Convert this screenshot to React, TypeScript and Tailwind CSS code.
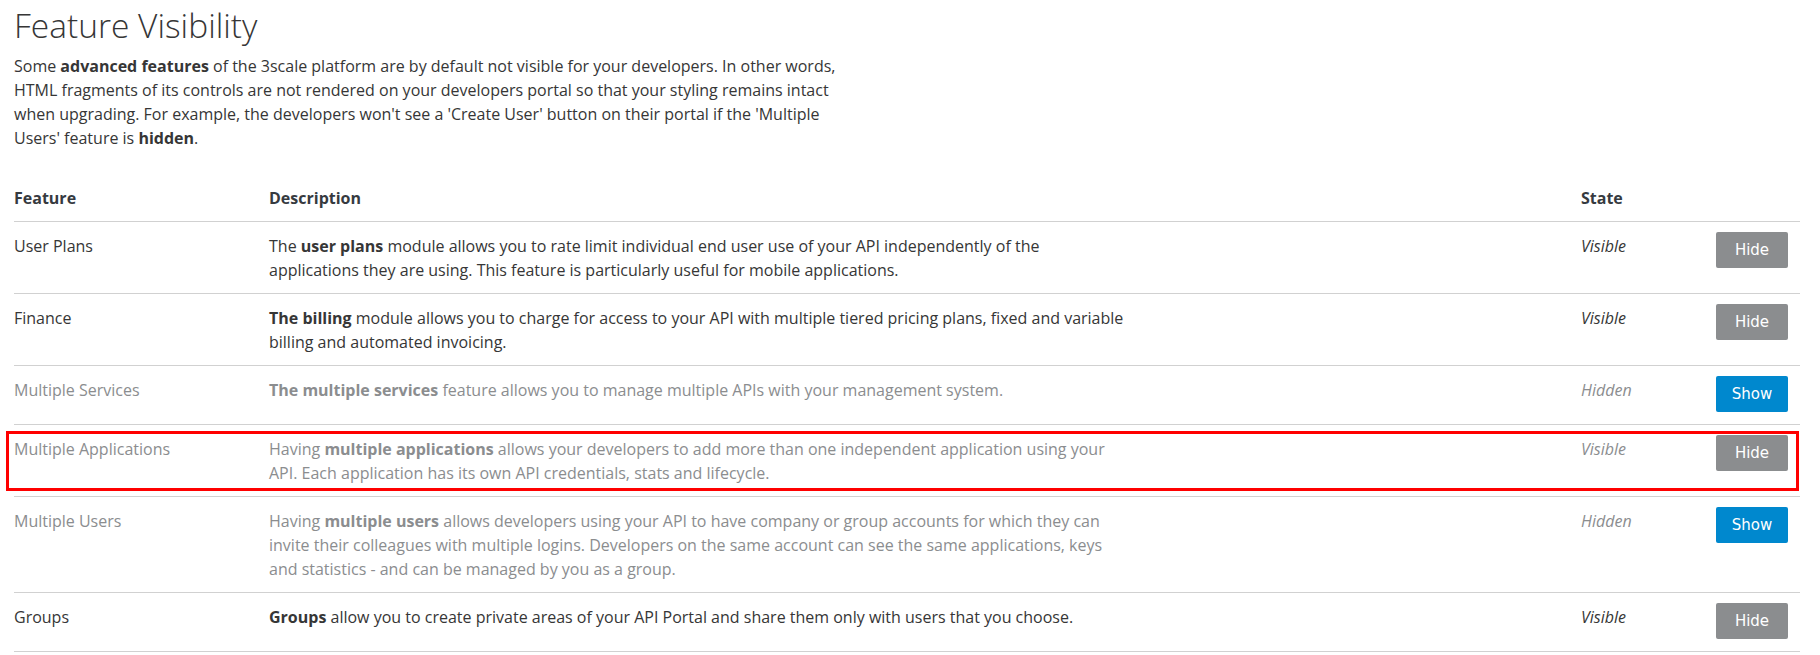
import React from 'react';

type Feature = {
  name: string;
  lead?: string;
  strong: string;
  rest: string;
  visible: boolean;
  muted: boolean;
  highlight?: boolean;
};

const features: Feature[] = [
  {
    name: 'User Plans',
    lead: 'The ',
    strong: 'user plans',
    rest: ' module allows you to rate limit individual end user use of your API independently of the applications they are using. This feature is particularly useful for mobile applications.',
    visible: true,
    muted: false,
  },
  {
    name: 'Finance',
    strong: 'The billing',
    rest: ' module allows you to charge for access to your API with multiple tiered pricing plans, fixed and variable billing and automated invoicing.',
    visible: true,
    muted: false,
  },
  {
    name: 'Multiple Services',
    strong: 'The multiple services',
    rest: ' feature allows you to manage multiple APIs with your management system.',
    visible: false,
    muted: true,
  },
  {
    name: 'Multiple Applications',
    lead: 'Having ',
    strong: 'multiple applications',
    rest: ' allows your developers to add more than one independent application using your API. Each application has its own API credentials, stats and lifecycle.',
    visible: true,
    muted: true,
    highlight: true,
  },
  {
    name: 'Multiple Users',
    lead: 'Having ',
    strong: 'multiple users',
    rest: ' allows developers using your API to have company or group accounts for which they can invite their colleagues with multiple logins. Developers on the same account can see the same applications, keys and statistics - and can be managed by you as a group.',
    visible: false,
    muted: true,
  },
  {
    name: 'Groups',
    strong: 'Groups',
    rest: ' allow you to create private areas of your API Portal and share them only with users that you choose.',
    visible: true,
    muted: false,
  },
];

const FeatureRow = ({ f }: { f: Feature }) => {
  const tone = f.muted ? 'text-[#8b8d8f]' : 'text-[#363636]';
  return (
    <div className={`relative grid grid-cols-[255px_1312px_135px_84px] border-t border-[#d1d1d1] ${tone}`}>
      <div className="pt-[12px] pb-[11px]">{f.name}</div>
      <div className="pt-[12px] pb-[11px]">
        <p className="max-w-[858px]">
          {f.lead}
          <strong className="font-bold">{f.strong}</strong>
          {f.rest}
        </p>
      </div>
      <div className="pt-[12px] pb-[11px] italic">{f.visible ? 'Visible' : 'Hidden'}</div>
      <div className="pt-[10px] pb-[12px]">
        <button
          className={`h-[36px] w-[72px] rounded-[2px] text-[15px] text-white font-['DejaVu_Sans',sans-serif] ${
            f.visible ? 'bg-[#8b8d8f]' : 'bg-[#0088ce]'
          }`}
        >
          {f.visible ? 'Hide' : 'Show'}
        </button>
      </div>
      {f.highlight && (
        <div className="pointer-events-none absolute left-[-8px] right-[1px] top-[6px] bottom-[5px] border-[3px] border-[#ff0000]" />
      )}
    </div>
  );
};

const App = () => {
  return (
    <div className="min-h-screen bg-white pl-[14px] pr-[20px] pt-[7px] font-['Open_Sans',sans-serif] text-[16px] leading-[24px] text-[#363636]">
      <h1 className="text-[33.5px] leading-[37px] font-light text-[#363636]">Feature Visibility</h1>
      <p className="mt-[10px] max-w-[850px]">
        Some <strong className="font-bold">advanced features</strong> of the 3scale platform are by default not visible
        for your developers. In other words, HTML fragments of its controls are not rendered on your developers portal
        so that your styling remains intact when upgrading. For example, the developers won't see a 'Create User' button
        on their portal if the 'Multiple Users' feature is <strong className="font-bold">hidden</strong>.
      </p>
      <div className="mt-[24px]">
        <div className="grid grid-cols-[255px_1312px_135px_84px] font-bold text-[#363a3f]">
          <div className="pt-[12px] pb-[11px]">Feature</div>
          <div className="pt-[12px] pb-[11px]">Description</div>
          <div className="pt-[12px] pb-[11px]">State</div>
          <div />
        </div>
        {features.map((f) => (
          <FeatureRow key={f.name} f={f} />
        ))}
        <div className="border-t border-[#d1d1d1]" />
      </div>
    </div>
  );
};

export default App;
